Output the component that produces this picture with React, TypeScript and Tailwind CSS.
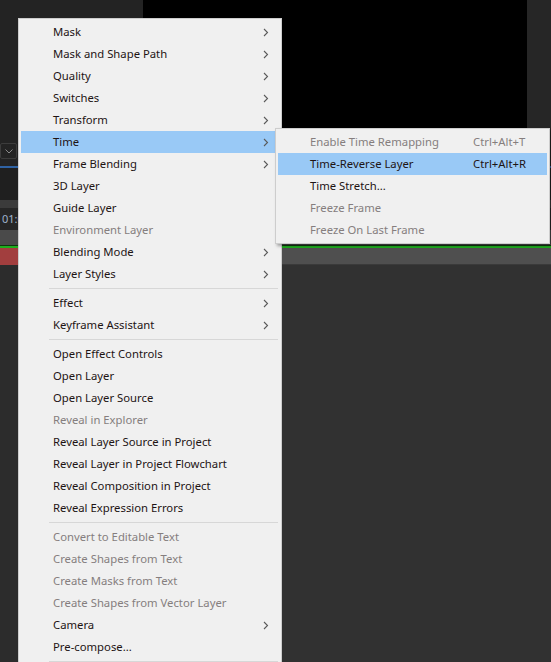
import React from 'react';

type Item =
  | { kind: 'sep' }
  | { kind: 'item'; label: string; sub?: boolean; disabled?: boolean; active?: boolean };

const it = (label: string, opts: Partial<{ sub: boolean; disabled: boolean; active: boolean }> = {}): Item => ({ kind: 'item', label, ...opts });
const sep: Item = { kind: 'sep' };

const mainItems: Item[] = [
  it('Mask', { sub: true }),
  it('Mask and Shape Path', { sub: true }),
  it('Quality', { sub: true }),
  it('Switches', { sub: true }),
  it('Transform', { sub: true }),
  it('Time', { sub: true, active: true }),
  it('Frame Blending', { sub: true }),
  it('3D Layer'),
  it('Guide Layer'),
  it('Environment Layer', { disabled: true }),
  it('Blending Mode', { sub: true }),
  it('Layer Styles', { sub: true }),
  sep,
  it('Effect', { sub: true }),
  it('Keyframe Assistant', { sub: true }),
  sep,
  it('Open Effect Controls'),
  it('Open Layer'),
  it('Open Layer Source'),
  it('Reveal in Explorer', { disabled: true }),
  it('Reveal Layer Source in Project'),
  it('Reveal Layer in Project Flowchart'),
  it('Reveal Composition in Project'),
  it('Reveal Expression Errors'),
  sep,
  it('Convert to Editable Text', { disabled: true }),
  it('Create Shapes from Text', { disabled: true }),
  it('Create Masks from Text', { disabled: true }),
  it('Create Shapes from Vector Layer', { disabled: true }),
  it('Camera', { sub: true }),
  it('Pre-compose...'),
  sep,
];

const timeItems = [
  { label: 'Enable Time Remapping', shortcut: 'Ctrl+Alt+T', disabled: true },
  { label: 'Time-Reverse Layer', shortcut: 'Ctrl+Alt+R', active: true },
  { label: 'Time Stretch...' },
  { label: 'Freeze Frame', disabled: true },
  { label: 'Freeze On Last Frame', disabled: true },
];

function Chevron() {
  return (
    <svg width="6" height="9" viewBox="0 0 6 9" className="shrink-0">
      <path d="M1 1l3.5 3.5L1 8" fill="none" stroke="#5a5a5a" strokeWidth="1.1" />
    </svg>
  );
}

function MenuRow({ label, sub, disabled, active }: { label: string; sub?: boolean; disabled?: boolean; active?: boolean }) {
  return (
    <div className={`mx-[2px] h-[22px] flex items-center pl-[32px] pr-[10px] ${active ? 'bg-[#99c9f6]' : ''}`}>
      <span className={`flex-1 pt-[1px] whitespace-nowrap ${disabled ? 'text-[#857e7e]' : 'text-[#1e1414]'}`}>{label}</span>
      {sub && <Chevron />}
    </div>
  );
}

export default function App() {
  return (
    <div className="relative w-[551px] h-[662px] overflow-hidden bg-[#232323]" style={{ fontFamily: '"Noto Sans", "Open Sans", sans-serif' }}>
      {/* workspace behind the menu */}
      <div className="flex flex-col h-full">
        <div className="flex h-[128px] shrink-0">
          <div className="w-[143px] bg-[#232323]" />
          <div className="w-[384px] bg-black" />
          <div className="flex-1 bg-[#262626]" />
        </div>
        <div className="h-[15px] shrink-0" />
        <div className="h-[16px] shrink-0 flex">
          <div className="w-[17px] border border-[#3c3c3c] rounded-[2px] flex items-center justify-center">
            <svg width="8" height="5" viewBox="0 0 8 5">
              <path d="M0.5 0.5L4 4l3.5-3.5" fill="none" stroke="#8a8a8a" strokeWidth="1" />
            </svg>
          </div>
        </div>
        <div className="h-[7px] shrink-0" />
        <div className="h-[2px] shrink-0 bg-[#2f62a3]" />
        <div className="h-[32px] shrink-0 bg-[#1f1f1f]" />
        <div className="h-[8px] shrink-0 bg-[#3b3b3b]" />
        <div className="h-[22px] shrink-0 bg-[#262626] flex items-center">
          <span className="pl-[2px] text-[11px] text-[#9fb2cc] whitespace-nowrap">01:0</span>
        </div>
        <div className="h-[15px] shrink-0 bg-[#4a4a4a]" />
        <div className="h-[3px] shrink-0 bg-[#1fae1f] border-t border-[#0d3a0d]" />
        <div className="h-[17px] shrink-0 flex">
          <div className="w-[150px] bg-[#a23e3e]" />
          <div className="flex-1 bg-[#4f4f4f] border-b border-[#3a3a3a]" />
        </div>
        <div className="flex-1 flex">
          <div className="w-[150px] bg-[#2c2c2c]" />
          <div className="flex-1 bg-[#313131]" />
        </div>
      </div>

      {/* layer context menu */}
      <div className="absolute left-[18px] top-[18px] w-[264px] bg-[#f0f0f0] border border-[#cdcdcd] pt-[2px] text-[11.3px]">
        {mainItems.map((m, i) =>
          m.kind === 'sep' ? (
            <div key={i} className="h-[7px] flex items-center ml-[30px] mr-[3px]">
              <div className="h-px w-full bg-[#d7d7d7]" />
            </div>
          ) : (
            <MenuRow key={i} label={m.label} sub={m.sub} disabled={m.disabled} active={m.active} />
          )
        )}
      </div>

      {/* Time submenu */}
      <div className="absolute left-[275px] top-[128px] w-[275px] bg-[#f0f0f0] border border-[#cdcdcd] py-[2px] text-[11.3px] shadow-[2px_2px_3px_rgba(0,0,0,0.35)]">
        {timeItems.map((s) => (
          <div key={s.label} className={`mx-[2px] h-[22px] flex items-center pl-[32px] ${s.active ? 'bg-[#99c9f6]' : ''}`}>
            <span className={`flex-1 pt-[1px] whitespace-nowrap ${s.disabled ? 'text-[#857e7e]' : 'text-[#1e1414]'}`}>{s.label}</span>
            <span className={`w-[74px] pt-[1px] whitespace-nowrap ${s.disabled ? 'text-[#857e7e]' : 'text-[#1e1414]'}`}>{s.shortcut ?? ''}</span>
          </div>
        ))}
      </div>
    </div>
  );
}
